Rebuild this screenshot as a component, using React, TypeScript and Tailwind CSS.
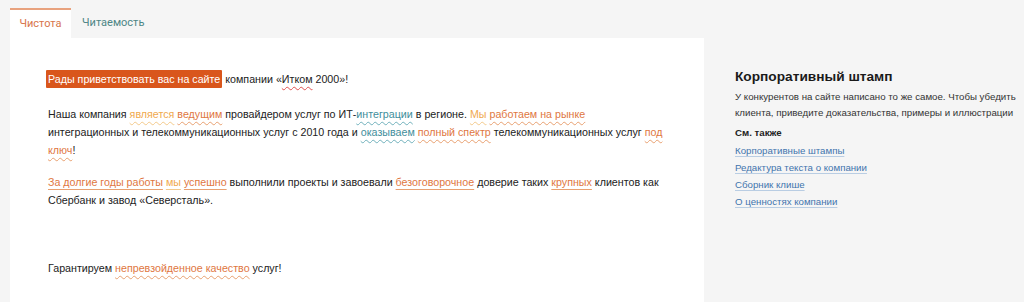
import React from "react";

const W = ({ c, u, wavy = true, children }: { c: string; u: string; wavy?: boolean; children: React.ReactNode }) => (
  <span
    className={`${c} ${u} underline ${wavy ? "decoration-wavy" : "decoration-solid"} decoration-1 underline-offset-[3px]`}
  >
    {children}
  </span>
);

const O = "text-[#e0773f]";
const Ou = "decoration-[#e8a070]";
const Y = "text-[#f0a94e]";
const Yu = "decoration-[#f3c98a]";
const T = "text-[#3f8e9c]";
const Tu = "decoration-[#6fb0bb]";

export default function App() {
  return (
    <div className="w-[1024px] h-[302px] bg-[#f5f5f5] overflow-hidden flex" style={{ fontFamily: '"Liberation Sans", Arial, sans-serif' }}>
      <div className="w-[704px] flex flex-col">
        <div className="h-[38px] flex items-end pl-[10px]" style={{ fontFamily: 'Roboto, "Liberation Sans", sans-serif' }}>
          <div className="h-[30px] w-[61px] bg-white border-t-2 border-[#e8a27e] flex items-center justify-center text-[11px] text-[#d8744a]">
            Чистота
          </div>
          <div className="h-[30px] px-[11px] flex items-center text-[11px] text-[#4d8585]">Читаемость</div>
        </div>
        <div className="flex-1 ml-[10px] bg-white pl-[38px] pr-[36px] pt-[32px] text-[10.7px] leading-[18px] text-[#222]">
          <p className="mb-[17px]">
            <span className="bg-[#d9561c] text-white px-[2px] -ml-[2px] rounded-[1px] inline-block leading-[18px]">Рады приветствовать вас на сайте</span>{" "}
            компании «<span className="underline decoration-wavy decoration-[#e05050] decoration-1 underline-offset-[3px]">Итком</span> 2000»!
          </p>
          <p className="mb-[14px]">
            Наша компания <W c={Y} u={Yu}>является</W> <W c={O} u={Ou}>ведущим</W> провайдером услуг по ИТ-<W c={T} u={Tu}>интеграции</W> в регионе.{" "}
            <W c={Y} u={Yu}>Мы</W> <W c={O} u={Ou}>работаем на рынке</W> интеграционных и телекоммуникационных услуг с 2010 года и{" "}
            <W c={T} u={Tu}>оказываем</W> <W c={O} u={Ou}>полный спектр</W> телекоммуникационных услуг <W c={O} u={Ou}>под ключ</W>!
          </p>
          <p className="mb-[50px]">
            <W c={O} u={Ou} wavy={false}>За долгие годы работы</W> <W c={Y} u={Yu} wavy={false}>мы</W>{" "}
            <W c={O} u={Ou} wavy={false}>успешно</W> выполнили проекты и завоевали{" "}
            <W c={O} u={Ou} wavy={false}>безоговорочное</W> доверие таких <W c={O} u={Ou} wavy={false}>крупных</W> клиентов как Сбербанк и завод «Северсталь».
          </p>
          <p>
            Гарантируем <W c={O} u={Ou}>непревзойденное качество</W> услуг!
          </p>
        </div>
      </div>
      <div className="flex-1 pl-[31px] pr-[4px] pt-[69px] text-[#222]">
        <h2 className="text-[13.7px] leading-[16px] font-bold text-[#1a1a1a]">Корпоративный штамп</h2>
        <p className="mt-[4px] text-[9.7px] leading-[16px] text-[#333]">
          У конкурентов на сайте написано то же самое. Чтобы убедить клиента, приведите доказательства, примеры и иллюстрации
        </p>
        <div className="mt-[4px] text-[9.7px] leading-[16px] font-bold text-[#222]">См. также</div>
        <ul className="mt-[1px] text-[9.7px] leading-[17px] text-[#3f74ad]">
          {["Корпоративные штампы", "Редактура текста о компании", "Сборник клише", "О ценностях компании"].map((t) => (
            <li key={t}>
              <a className="underline decoration-[#b9cde3] underline-offset-[2px]">{t}</a>
            </li>
          ))}
        </ul>
      </div>
    </div>
  );
}
